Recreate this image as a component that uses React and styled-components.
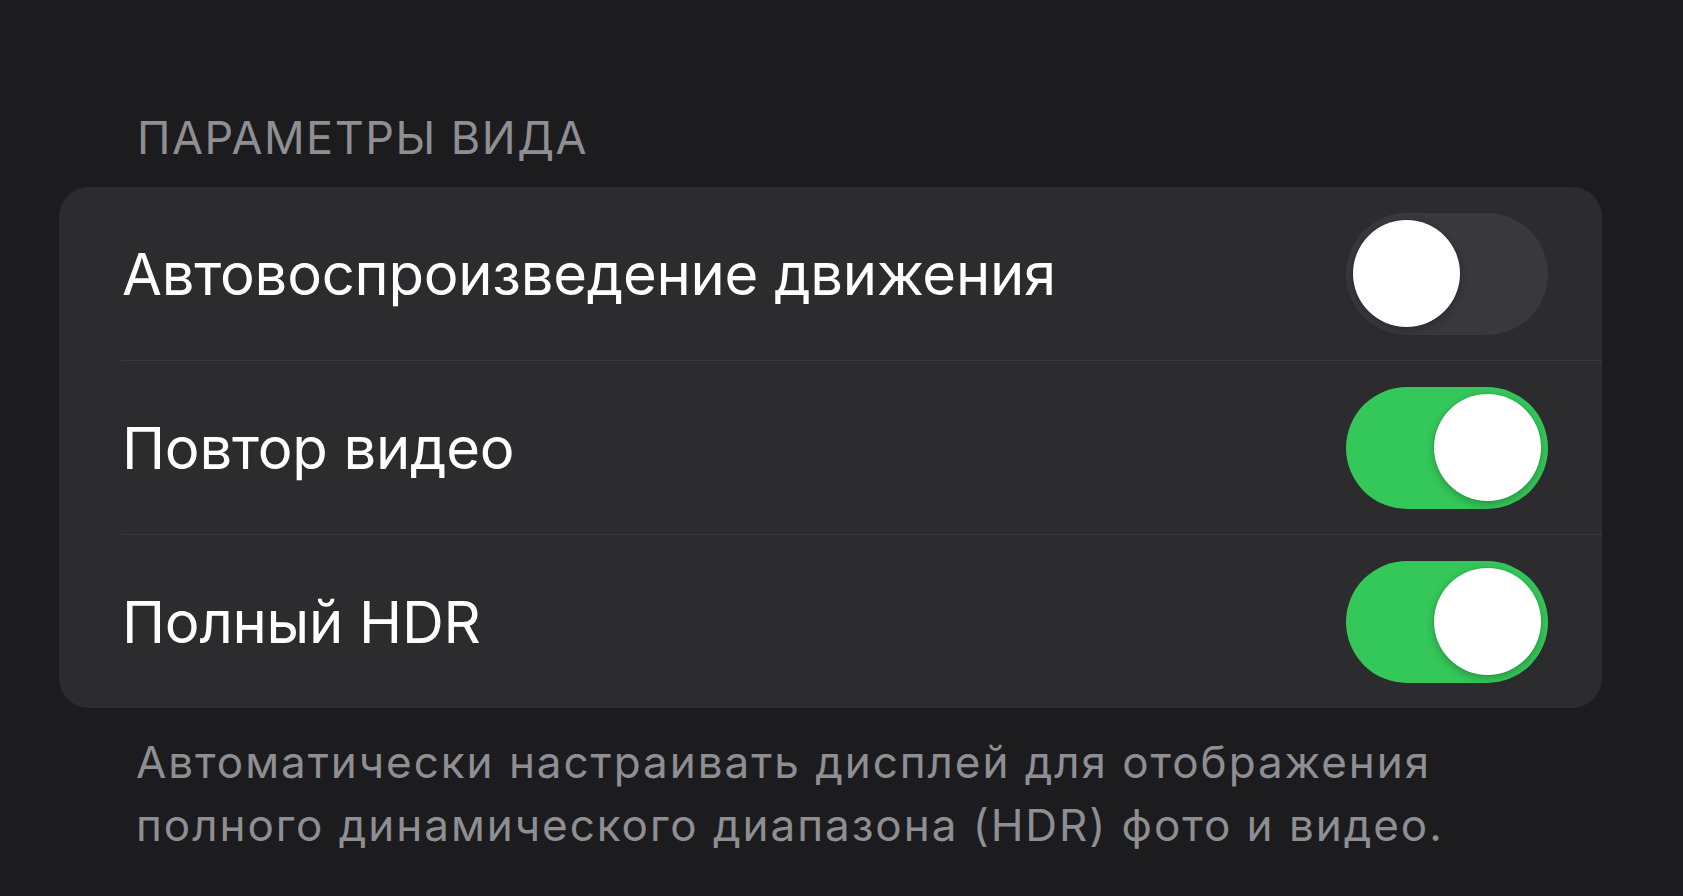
import { useState } from "react";
import styled, { createGlobalStyle } from "styled-components";

const GlobalStyle = createGlobalStyle`
  html, body {
    margin: 0;
    padding: 0;
    background: #1c1c1e;
    font-family: Inter, "Noto Sans", "DejaVu Sans", sans-serif;
    -webkit-font-smoothing: antialiased;
  }
`;

const rows = [
  { id: "motion", label: "Автовоспроизведение движения", on: false },
  { id: "loop", label: "Повтор видео", on: true },
  { id: "hdr", label: "Полный HDR", on: true },
];

export default function App() {
  const [state, setState] = useState(
    Object.fromEntries(rows.map((r) => [r.id, r.on]))
  );

  const toggle = (id) => setState((s) => ({ ...s, [id]: !s[id] }));

  return (
    <>
      <GlobalStyle />
      <Page>
        <SectionHeader>ПАРАМЕТРЫ ВИДА</SectionHeader>
        <Card>
          {rows.map((row, i) => (
            <Row key={row.id} $first={i === 0}>
              <Label>{row.label}</Label>
              <Switch
                type="button"
                role="switch"
                aria-checked={state[row.id]}
                $on={state[row.id]}
                onClick={() => toggle(row.id)}
              >
                <Knob $on={state[row.id]} />
              </Switch>
            </Row>
          ))}
        </Card>
        <Footer>
          Автоматически настраивать дисплей для отображения
          <br />
          полного динамического диапазона (HDR) фото и видео.
        </Footer>
      </Page>
    </>
  );
}

// Styles
const Page = styled.main`
  display: flex;
  flex-direction: column;
  width: 1543px;
  padding: 111px 0 0 59px;
`;

const SectionHeader = styled.h2`
  margin: 0 0 22px;
  padding-left: 78px;
  font-size: 45px;
  line-height: 54px;
  font-weight: 400;
  color: #8e8e93;
  letter-spacing: 1.5px;
`;

const Card = styled.section`
  display: flex;
  flex-direction: column;
  background: #2c2c2e;
  border-radius: 30px;
  padding-left: 62px;
`;

const Row = styled.div`
  display: flex;
  align-items: center;
  justify-content: space-between;
  box-sizing: border-box;
  height: ${({ $first }) => ($first ? "173px" : "174px")};
  padding: 0 54px 0 1px;
  border-top: ${({ $first }) => ($first ? "none" : "1px solid #3a3a3c")};
`;

const Label = styled.span`
  font-size: 58px;
  line-height: 70px;
  color: #ffffff;
  letter-spacing: -0.25px;
`;

const Switch = styled.button`
  display: flex;
  align-items: center;
  justify-content: ${({ $on }) => ($on ? "flex-end" : "flex-start")};
  box-sizing: border-box;
  width: 202px;
  height: 122px;
  padding: 0 7px;
  border: none;
  border-radius: 61px;
  background: ${({ $on }) => ($on ? "#34c759" : "#39393d")};
  cursor: pointer;
`;

const Knob = styled.span`
  width: 107px;
  height: 107px;
  border-radius: 50%;
  background: #ffffff;
  box-shadow: 0 3px 8px rgba(0, 0, 0, 0.25), 0 0 0 1px rgba(0, 0, 0, 0.06);
`;

const Footer = styled.p`
  margin: 23px 0 0;
  padding-left: 77px;
  font-size: 44px;
  line-height: 63px;
  color: #8e8e93;
  letter-spacing: 1.95px;
`;
